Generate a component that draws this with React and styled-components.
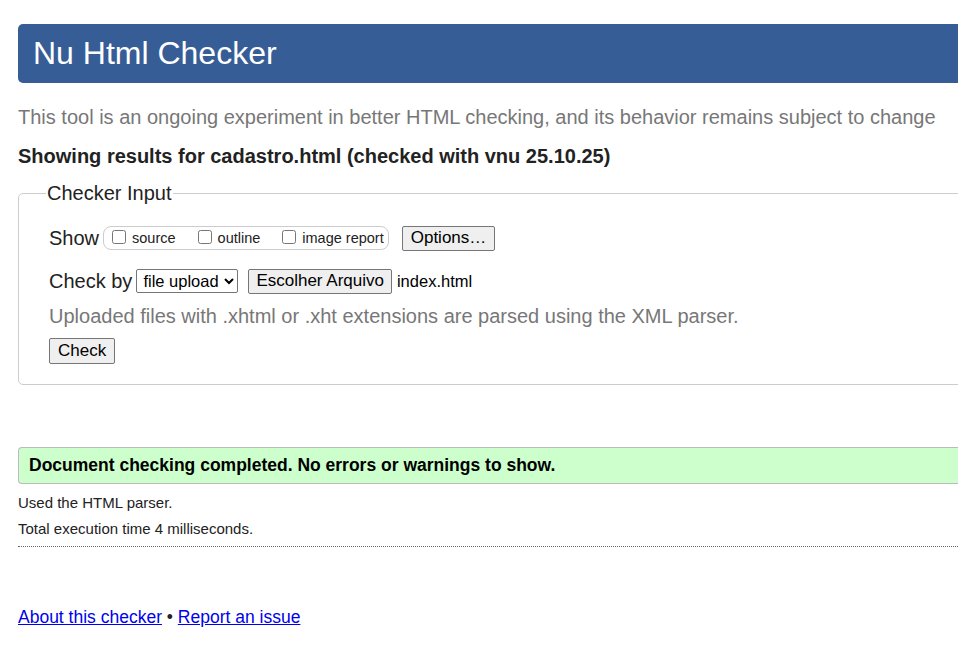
import React from 'react';
import styled, { createGlobalStyle } from 'styled-components';

const GlobalStyle = createGlobalStyle`
  html, body {
    margin: 0;
    padding: 0;
    background: #fff;
    overflow: hidden;
  }
  body {
    font-family: "Liberation Sans", Arial, sans-serif;
    color: #222;
  }
`;

const Page = styled.div`
  width: 1100px;
  padding: 24px 0 0 18px;
  box-sizing: border-box;
`;

const Header = styled.h1`
  margin: 0;
  height: 59px;
  display: flex;
  align-items: center;
  padding: 0 15px;
  background: #365d95;
  color: #fff;
  font-size: 32px;
  font-weight: normal;
  border-radius: 5px 0 0 5px;
`;

const Tagline = styled.p`
  margin: 22px 0 0;
  font-size: 20px;
  line-height: 24px;
  color: #777;
`;

const Results = styled.p`
  margin: 15px 0 0;
  font-size: 20px;
  line-height: 24px;
  font-weight: bold;
  color: #222;
`;

const Fieldset = styled.fieldset`
  margin: 14px 0 0;
  padding: 10px 30px 19px;
  border: 1px solid #ccc;
  border-radius: 5px 0 0 5px;
  width: 1082px;
  box-sizing: border-box;
  min-width: 0;
`;

const Legend = styled.legend`
  font-size: 20px;
  padding: 0 1px;
  margin-left: -3px;
  color: #222;
`;

const Row = styled.div`
  display: flex;
  align-items: center;
  height: 28px;
  margin-top: ${p => p.$top || 0}px;
`;

const Label = styled.span`
  font-size: 20px;
  color: #222;
  margin-right: ${p => p.$gap || 4}px;
`;

const Choices = styled.span`
  display: inline-flex;
  align-items: center;
  height: 22px;
  border: 1px solid #ccc;
  border-radius: 8px;
  padding: 0 4px 0 8px;
  gap: 22px;
`;

const Choice = styled.label`
  display: inline-flex;
  align-items: center;
  font-size: 14.5px;
  color: #222;
  input {
    margin: 0 6px 3px 0;
    width: 14px;
    height: 14px;
  }
`;

const Button = styled.button`
  font-family: "Liberation Sans", Arial, sans-serif;
  font-size: 17px;
  color: #000;
  background: #efefef;
  border: 1px solid #767676;
  border-radius: 2px;
  padding: 1px ${p => p.$pad || 8}px;
  height: ${p => p.$h || 25}px;
  margin-left: ${p => p.$left || 0}px;
`;

const Select = styled.select`
  font-family: "Liberation Sans", Arial, sans-serif;
  font-size: 16.5px;
  color: #000;
  background: #fff;
  border: 1px solid #767676;
  border-radius: 2px;
  height: 24px;
  width: 102px;
  padding: 0 2px;
`;

const FileName = styled.span`
  font-size: 16.5px;
  color: #000;
  margin-left: 5px;
`;

const Hint = styled.p`
  margin: 9px 0 0;
  font-size: 20px;
  line-height: 24px;
  color: #777;
`;

const Success = styled.div`
  margin-top: 62px;
  height: 35px;
  display: flex;
  align-items: center;
  padding-left: 10px;
  background: #ccffcc;
  border: 1px solid #bbb;
  border-right: none;
  border-radius: 4px 0 0 4px;
  font-size: 17.5px;
  font-weight: bold;
  color: #000;
`;

const Stats = styled.div`
  margin-top: 6px;
  padding-bottom: 4px;
  border-bottom: 1px dotted #666;
`;

const Stat = styled.p`
  margin: 0;
  font-size: 15px;
  line-height: 26px;
  color: #222;
`;

const Footer = styled.p`
  margin: 60px 0 0;
  font-size: 17.5px;
  color: #222;
  a {
    color: #0000ee;
    text-decoration: underline;
  }
`;

export default function App() {
  return (
    <>
      <GlobalStyle />
      <Page>
        <Header>Nu Html Checker</Header>
        <Tagline>This tool is an ongoing experiment in better HTML checking, and its behavior remains subject to change</Tagline>
        <Results>Showing results for cadastro.html (checked with vnu 25.10.25)</Results>
        <Fieldset>
          <Legend>Checker Input</Legend>
          <Row $top={9}>
            <Label>Show</Label>
            <Choices>
              <Choice><input type="checkbox" />source</Choice>
              <Choice><input type="checkbox" />outline</Choice>
              <Choice><input type="checkbox" />image report</Choice>
            </Choices>
            <Button $left={13}>Options…</Button>
          </Row>
          <Row $top={15}>
            <Label>Check by</Label>
            <Select defaultValue="file">
              <option value="file">file upload</option>
              <option value="address">address</option>
              <option value="text">text input</option>
            </Select>
            <Button $left={10} $pad={7}>Escolher Arquivo</Button>
            <FileName>index.html</FileName>
          </Row>
          <Hint>Uploaded files with .xhtml or .xht extensions are parsed using the XML parser.</Hint>
          <Row $top={9}>
            <Button $h={26}>Check</Button>
          </Row>
        </Fieldset>
        <Success>Document checking completed. No errors or warnings to show.</Success>
        <Stats>
          <Stat>Used the HTML parser.</Stat>
          <Stat>Total execution time 4 milliseconds.</Stat>
        </Stats>
        <Footer>
          <a href="#about">About this checker</a> • <a href="#report">Report an issue</a>
        </Footer>
      </Page>
    </>
  );
}
